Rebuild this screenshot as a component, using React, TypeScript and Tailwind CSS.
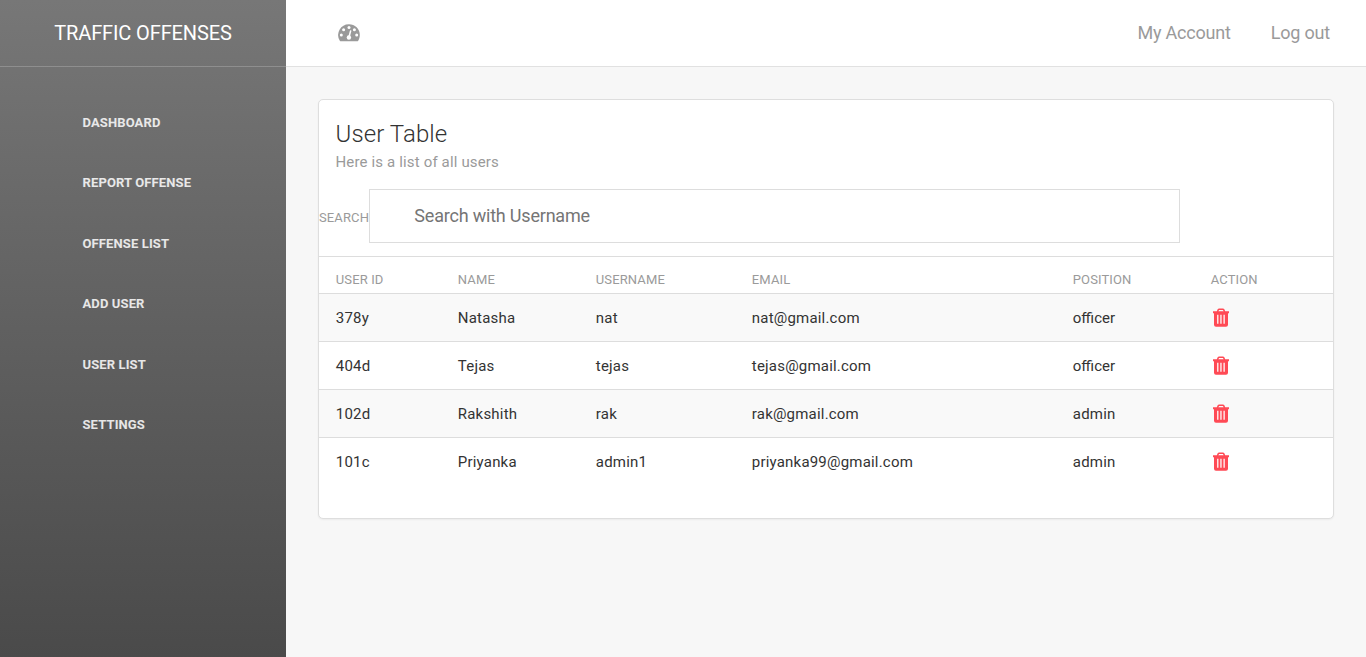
const links = ["Dashboard", "Report Offense", "Offense List", "Add User", "User List", "Settings"];
const headings = ["User ID", "Name", "Username", "Email", "Position", "Action"];
const users = [
  ["378y", "Natasha", "nat", "nat@gmail.com", "officer"],
  ["404d", "Tejas", "tejas", "tejas@gmail.com", "officer"],
  ["102d", "Rakshith", "rak", "rak@gmail.com", "admin"],
  ["101c", "Priyanka", "admin1", "priyanka99@gmail.com", "admin"],
];
const columns = "grid grid-cols-[122px_138px_156px_321px_138px_1fr] pl-[16.8px]";

function GaugeIcon() {
  return (
    <svg width="22" height="18" viewBox="0 0 22 18" aria-hidden="true">
      <path fill="#9a9a9a" d="M11 0.2A10.8 10.8 0 0 1 21.8 11c0 2.1-.6 4-1.6 5.7-.3.5-.6.6-1.1.6H2.9c-.5 0-.8-.1-1.1-.6A10.8 10.8 0 0 1 11 .2z" />
      <g fill="#ffffff">
        <circle cx="3.3" cy="11" r="1.5" />
        <circle cx="5.6" cy="5.7" r="1.5" />
        <circle cx="11" cy="3.4" r="1.5" />
        <circle cx="16.4" cy="5.7" r="1.5" />
        <circle cx="18.7" cy="11" r="1.5" />
        <circle cx="10.9" cy="13.5" r="2.2" />
      </g>
      <path d="M11 13L12.6 7" stroke="#ffffff" strokeWidth="1.5" strokeLinecap="round" />
    </svg>
  );
}

function TrashIcon() {
  return (
    <svg width="18" height="20" viewBox="0 0 18 20" aria-hidden="true">
      <path d="M5.4 4L6.2 1.9Q6.5 1.2 7.2 1.2h3.6q.7 0 1 .7L12.6 4" fill="none" stroke="#ff4a55" strokeWidth="1.5" />
      <path fill="#ff4a55" d="M1 3.3h16v2h-1V16.700a2 2 0 0 1-2 2H4a2 2 0 0 1-2-2V5.300H1z" />
      <path fill="#ffe3e4" d="M5 6.800h1.500v9H5zM8.200 6.800h1.500v9H8.200zM11.400 6.800h1.500v9h-1.500z" />
    </svg>
  );
}

export default function App() {
  return (
    <div className="flex h-[657px] w-full overflow-hidden bg-[#f7f7f7] font-[Roboto,sans-serif]">
      <aside className="flex w-[286px] shrink-0 flex-col bg-linear-to-b from-[#777777] to-[#4a4a4a] text-white">
        <div className="flex h-[67px] items-center justify-center border-b border-white/20 text-[20px] tracking-[-0.12px]">
          TRAFFIC OFFENSES
        </div>
        <nav className="flex flex-col gap-[10.45px] pt-[30.6px] pl-[82.5px]">
          {links.map((link) => (
            <a key={link} className="flex h-[50px] items-center text-[13px] font-bold tracking-[0.12px] text-white/85 uppercase">
              {link}
            </a>
          ))}
        </nav>
      </aside>
      <div className="flex min-w-0 grow flex-col">
        <header className="flex h-[67px] shrink-0 items-center border-b border-[#e1e1e1] bg-white pr-9 pl-[52px] text-[18px] tracking-[-0.2px] text-[#9a9a9a]">
          <GaugeIcon />
          <a className="ml-auto pb-[2px]">My Account</a>
          <a className="ml-10 pb-[2px]">Log out</a>
        </header>
        <main className="px-8 pt-8">
          <section className="h-[420px] rounded-[5px] border border-[#dedede] bg-white shadow-[0_1px_2px_rgba(0,0,0,0.05)]">
            <div className="h-[89px] pt-[18px] pl-[16.5px]">
              <h4 className="text-[24px] leading-[32px] font-light tracking-[0.1px] text-[#333333]">User Table</h4>
              <p className="text-[15px] leading-6 tracking-[0.15px] text-[#9a9a9a]">Here is a list of all users</p>
            </div>
            <div className="flex h-[67px]">
              <label className="w-[50px] pt-[19px] text-[13px] leading-5 tracking-[0.12px] whitespace-nowrap text-[#9a9a9a]">SEARCH</label>
              <input
                className="h-[54px] w-[811px] border border-[#dddddd] bg-white px-[44.3px] pb-[2px] text-[18px] tracking-[-0.2px] text-[#333333] outline-none placeholder:text-[#757575]"
                placeholder="Search with Username"
              />
            </div>
            <div className={`${columns} h-[38px] border-y border-[#dddddd] pt-[13px] text-[13px] leading-5 tracking-[0.12px] text-[#9a9a9a] uppercase`}>
              {headings.map((heading) => (
                <span key={heading}>{heading}</span>
              ))}
            </div>
            {users.map((user, index) => (
              <div
                key={user[0]}
                className={`${columns} h-12 items-start pt-[12px] text-[15px] leading-6 text-[#333333] ${index % 2 ? "" : "bg-[#f9f9f9]"} ${index < 3 ? "border-b border-[#dddddd]" : ""}`}
              >
                {user.map((value, column) => (
                  <span key={column} className={value === "officer" ? "tracking-[0px]" : "tracking-[0.2px]"}>
                    {value}
                  </span>
                ))}
                <button className="mt-[2px] w-fit pl-[1px]" aria-label="Delete user">
                  <TrashIcon />
                </button>
              </div>
            ))}
          </section>
        </main>
      </div>
    </div>
  );
}
